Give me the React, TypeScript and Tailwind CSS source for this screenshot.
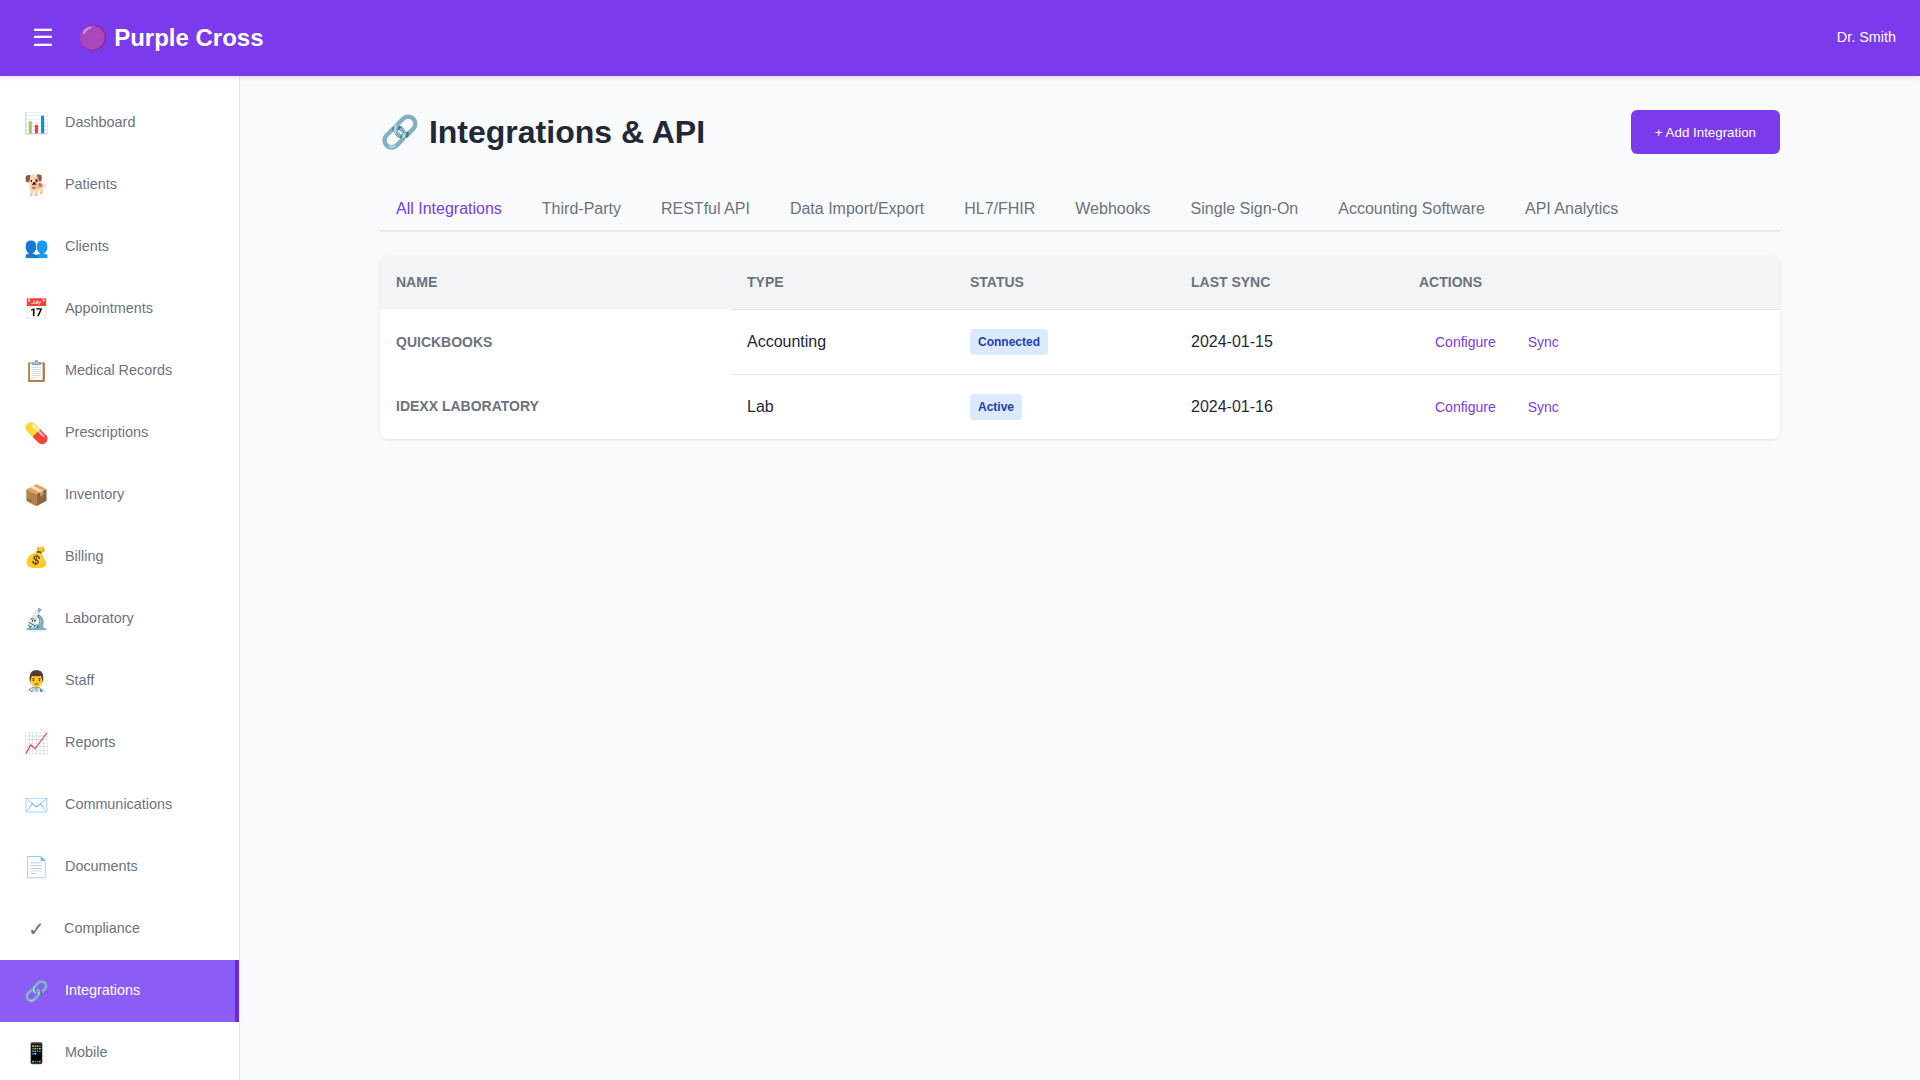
const navItems = [
  { icon: "📊", label: "Dashboard" },
  { icon: "🐕", label: "Patients" },
  { icon: "👥", label: "Clients" },
  { icon: "📅", label: "Appointments" },
  { icon: "📋", label: "Medical Records" },
  { icon: "💊", label: "Prescriptions" },
  { icon: "📦", label: "Inventory" },
  { icon: "💰", label: "Billing" },
  { icon: "🔬", label: "Laboratory" },
  { icon: "👨‍⚕️", label: "Staff" },
  { icon: "📈", label: "Reports" },
  { icon: "✉️", label: "Communications" },
  { icon: "📄", label: "Documents" },
  { icon: "✓", label: "Compliance" },
  { icon: "🔗", label: "Integrations", active: true },
  { icon: "📱", label: "Mobile" },
];

const tabs = ["All Integrations", "Third-Party", "RESTful API", "Data Import/Export", "HL7/FHIR", "Webhooks", "Single Sign-On", "Accounting Software", "API Analytics"];

const rows = [
  { name: "QuickBooks", type: "Accounting", status: "Connected", sync: "2024-01-15" },
  { name: "IDEXX Laboratory", type: "Lab", status: "Active", sync: "2024-01-16" },
];

const App = () => {
  return (
    <div className="flex h-screen flex-col overflow-hidden bg-[#f9fafb] font-['Liberation_Sans',Arial,sans-serif] text-[16px] leading-normal text-[#1f2937]">
      <header className="relative z-10 flex h-[76px] shrink-0 items-center justify-between bg-[#7c3aed] px-6 text-white shadow-[0_2px_4px_rgba(0,0,0,0.1)]">
        <div className="flex items-center gap-[15.5px]">
          <button className="p-2 text-2xl leading-none text-white">☰</button>
          <h1 className="text-2xl font-bold">🟣 Purple Cross</h1>
        </div>
        <span className="mb-px text-[14.4px]">Dr. Smith</span>
      </header>

      <div className="flex min-h-0 flex-1">
        <aside className="w-[240px] shrink-0 overflow-hidden border-r border-[#e5e7eb] bg-white">
          <nav className="py-4">
            {navItems.map((item) => (
              <a
                key={item.label}
                className={`flex h-[62px] items-center gap-4 px-6 text-[14.4px] ${item.active ? "border-r-4 border-[#6d28d9] bg-[#8b5cf6] text-white" : "text-[#6b7280]"}`}
              >
                <span className="min-w-6 text-center text-xl">{item.icon}</span>
                <span className="mb-px">{item.label}</span>
              </a>
            ))}
          </nav>
        </aside>

        <main className="min-w-0 flex-1 overflow-hidden p-8">
          <div className="mx-auto max-w-[1400px]">
            <div className="mb-8 flex items-center justify-between">
              <h1 className="text-[32px] font-bold">🔗 Integrations &amp; API</h1>
              <button className="h-11 rounded-md bg-[#7c3aed] px-6 pt-px text-[13.33px] font-medium text-white">+ Add Integration</button>
            </div>

            <div className="mb-6 flex gap-2 border-b-2 border-[#e5e7eb]">
              {tabs.map((tab, i) => (
                <button key={tab} className={`px-4 py-3 text-base leading-[18px] ${i === 0 ? "text-[#7c3aed]" : "text-[#6b7280]"}`}>
                  {tab}
                </button>
              ))}
            </div>

            <div className="overflow-hidden rounded-lg bg-white shadow-[0_1px_3px_rgba(0,0,0,0.1)]">
              <table className="w-full table-fixed border-collapse text-left">
                <thead>
                  <tr className="h-[53px] bg-[#f3f4f6] text-sm font-bold uppercase text-[#6b7280]">
                    <th className="w-[351px] border-b border-transparent px-4">Name</th>
                    <th className="w-[223px] border-b border-[#e5e7eb] px-4">Type</th>
                    <th className="w-[221px] border-b border-[#e5e7eb] px-4">Status</th>
                    <th className="w-[228px] border-b border-[#e5e7eb] px-4">Last Sync</th>
                    <th className="border-b border-[#e5e7eb] px-4">Actions</th>
                  </tr>
                </thead>
                <tbody>
                  {rows.map((row, i) => (
                    <tr key={row.name} className="h-[65px]">
                      <th className={`px-4 text-sm font-bold uppercase text-[#6b7280] ${i === 1 ? "pb-0.5" : ""}`}>{row.name}</th>
                      <td className={`px-4 ${i === 0 ? "border-b border-[#e5e7eb]" : ""}`}>{row.type}</td>
                      <td className={`px-4 ${i === 0 ? "border-b border-[#e5e7eb]" : ""}`}>
                        <span className="inline-block rounded bg-[#dbeafe] px-2 py-1 text-xs font-bold leading-[18px] text-[#1e40af]">{row.status}</span>
                      </td>
                      <td className={`px-4 ${i === 0 ? "border-b border-[#e5e7eb]" : ""}`}>{row.sync}</td>
                      <td className={`px-4 ${i === 0 ? "border-b border-[#e5e7eb]" : ""}`}>
                        <div className="flex text-sm text-[#7c3aed]">
                          <a className="px-4">Configure</a>
                          <a className="px-4">Sync</a>
                        </div>
                      </td>
                    </tr>
                  ))}
                </tbody>
              </table>
            </div>
          </div>
        </main>
      </div>
    </div>
  );
};

export default App;
